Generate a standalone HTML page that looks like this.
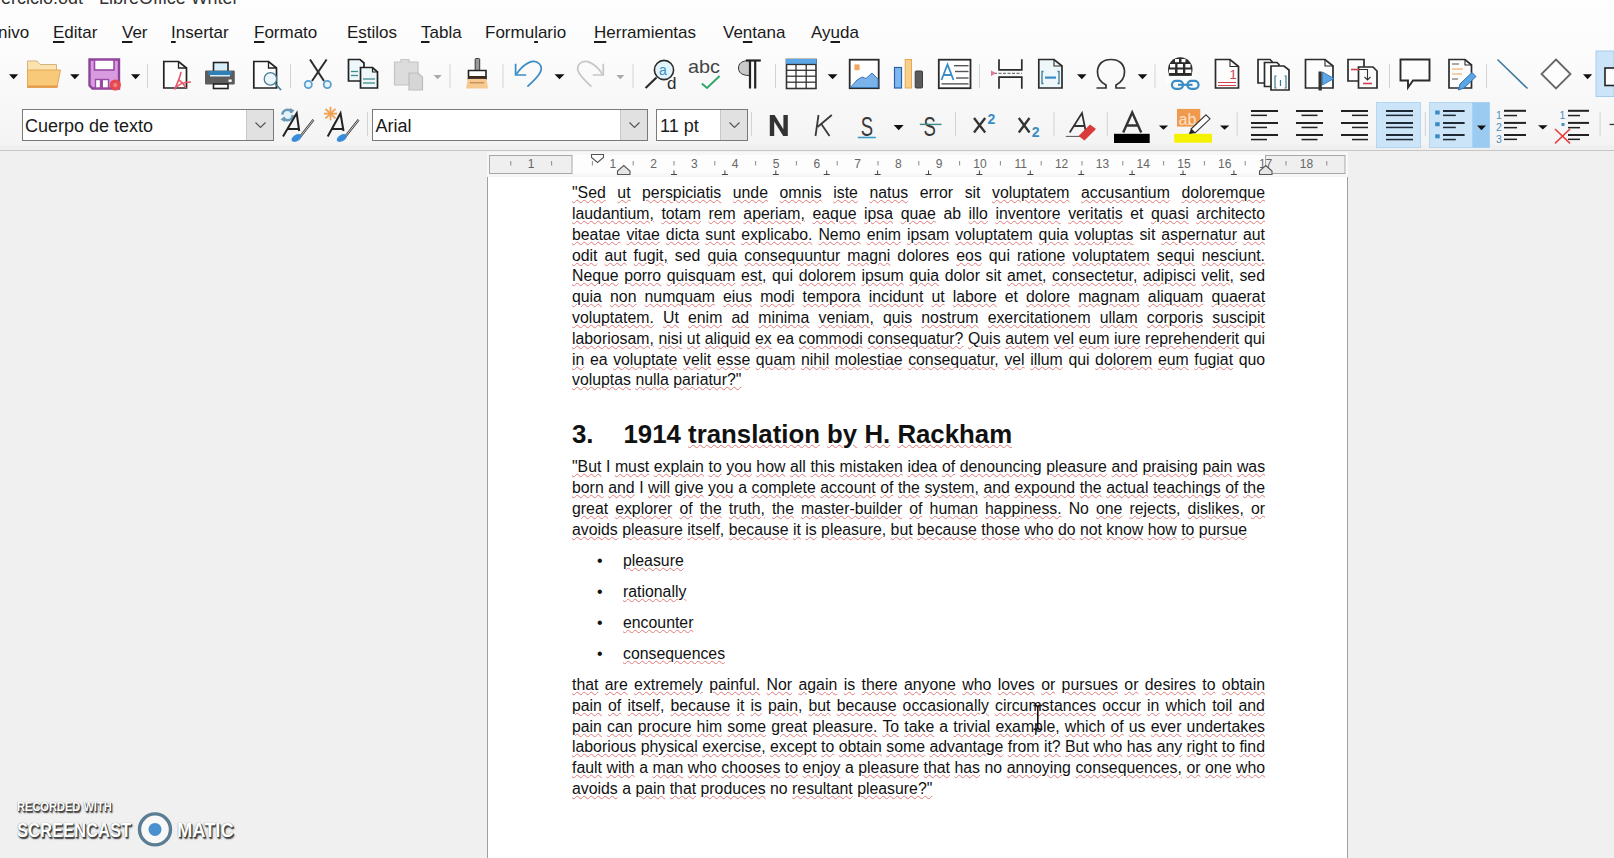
<!DOCTYPE html>
<html><head><meta charset="utf-8">
<style>
html,body{margin:0;padding:0}
body{width:1614px;height:858px;overflow:hidden;position:relative;background:#f0f0f0;font-family:"Liberation Sans",sans-serif;}
#top{position:absolute;left:0;top:0;width:1614px;height:150px;background:linear-gradient(#fefefe 0px,#fcfcfc 48px,#f8f8f8 100px,#f4f4f4 144px,#efefef 146px,#efefef 150px);}
#sep{position:absolute;left:0;top:150px;width:1614px;height:1px;background:#c6c6c6;}
.title{position:absolute;left:1px;top:-12px;font-size:18px;color:#333;white-space:pre}
.mi{position:absolute;top:21.6px;font-size:17px;line-height:22px;color:#1a1a1a;white-space:pre}
.mi u{text-decoration:underline;text-underline-offset:3px;text-decoration-thickness:1.6px}
.box{position:absolute;background:#fff;border:1px solid #7a7a7a;box-sizing:border-box}
.dd{position:absolute;top:0;bottom:0;right:0;background:#e1e1e1;border-left:1px solid #c8c8c8}
.bt{position:absolute;font-size:18px;line-height:20px;color:#1a1a1a;white-space:pre}
#page{position:absolute;left:487px;top:177px;width:861px;height:700px;background:#fff;border-left:1px solid #a0a0a0;border-right:1px solid #a0a0a0;box-sizing:border-box}
.ln{position:absolute;left:572px;width:693px;font-size:15.83px;line-height:20px;color:#111;text-align:justify;text-align-last:justify;white-space:nowrap}
.ln.l{text-align:left;text-align-last:left}
.ln s,.h3 s{text-decoration:underline wavy #e07a7a;text-decoration-thickness:1.2px;text-underline-offset:0.5px}
.bu{position:absolute;left:597px;font-size:15.83px;line-height:20px;color:#111}
.h3{position:absolute;top:418.5px;font-size:25.8px;font-weight:bold;line-height:30px;color:#111;white-space:pre}
#ruler{position:absolute;left:489px;top:155px;width:857px;height:19px;background:#fff}
.rb{position:absolute;top:0;height:19px;background:#ededed;border:1px solid #a6a6a6;box-sizing:border-box}
.rn{position:absolute;top:157px;font-size:13px;line-height:14px;color:#555;}
.sepv{position:absolute;width:1px;background:#d9d9d9}
</style></head><body>
<div id="top"></div>
<div id="sep"></div>
<div class="title">ercicio.odt - LibreOffice Writer</div>
<div class="mi" style="left:-2px">nivo</div>
<div class="mi" style="left:53px"><u>E</u>ditar</div>
<div class="mi" style="left:122px"><u>V</u>er</div>
<div class="mi" style="left:171px"><u>I</u>nsertar</div>
<div class="mi" style="left:254px"><u>F</u>ormato</div>
<div class="mi" style="left:347px">E<u>s</u>tilos</div>
<div class="mi" style="left:421px"><u>T</u>abla</div>
<div class="mi" style="left:485px">Formu<u>l</u>ario</div>
<div class="mi" style="left:594px"><u>H</u>erramientas</div>
<div class="mi" style="left:723px">Ve<u>n</u>tana</div>
<div class="mi" style="left:811px">Ay<u>u</u>da</div>
<svg style="position:absolute;left:0;top:0" width="1614" height="150" viewBox="0 0 1614 150">
<g id="row1">
<!-- dropdown arrows -->
<g fill="#111">
<polygon points="9,74.3 18.2,74.3 13.6,79.2"/>
<polygon points="70.2,74.3 79.5,74.3 74.9,79.2"/>
<polygon points="131,74.3 140.2,74.3 135.6,79.2"/>
<polygon points="554.5,74.3 564.5,74.3 559.5,79.2"/>
<polygon points="827.7,74.3 837.5,74.3 832.6,79.2"/>
<polygon points="1077,74.3 1086.5,74.3 1081.8,79.2"/>
<polygon points="1137.8,74.3 1147.3,74.3 1142.5,79.2"/>
<polygon points="1583,74.3 1592.2,74.3 1587.6,79.2"/>
</g>
<g fill="#aaa">
<polygon points="433.5,75 441.8,75 437.6,79.2"/>
<polygon points="616.3,75 624.3,75 620.3,79.2"/>
</g>
<!-- separators -->
<g fill="#d3d3d3">
<rect x="147" y="64" width="1" height="24"/>
<rect x="290" y="64" width="1" height="24"/>
<rect x="449.5" y="64" width="1" height="24"/>
<rect x="502.5" y="64" width="1" height="24"/>
<rect x="632.5" y="64" width="1" height="24"/>
<rect x="775" y="64" width="1" height="24"/>
<rect x="979" y="64" width="1" height="24"/>
<rect x="1154.5" y="64" width="1" height="24"/>
<rect x="1389" y="64" width="1" height="24"/>
<rect x="1486" y="64" width="1" height="24"/>
</g>
<!-- folder -->
<path d="M27.5,87.5 V61 H37 L40,64.5 H56.5 V70" fill="#fbe3b0" stroke="#d7b27a" stroke-width="1"/>
<path d="M27.5,87.5 V70 H60.5 L57,87.5 Z" fill="#f7c978" stroke="#e0a85a" stroke-width="1"/>
<rect x="27.5" y="85.5" width="30" height="2" fill="#e89a4a"/>
<!-- floppy -->
<path d="M89.5,59.5 H119 V88.5 H92.5 L89.5,85.5 Z" fill="#d89be0" stroke="#8f429a" stroke-width="2.4"/>
<rect x="94.5" y="60" width="19.5" height="10" fill="#fff" stroke="#9a4aa3" stroke-width="1.6"/>
<rect x="95.5" y="79.5" width="13" height="8.5" fill="#fff" stroke="#9a4aa3" stroke-width="1.4"/>
<rect x="99.8" y="80" width="3.2" height="8" fill="#9a4aa3"/>
<circle cx="115.3" cy="85" r="5.6" fill="#e5484d"/>
<circle cx="115.3" cy="85" r="2.2" fill="#f07d80"/>
<!-- pdf -->
<path d="M163.8,61.5 H178.5 L186.5,68 V88 H163.8 Z" fill="#fdfdfd" stroke="#222" stroke-width="1.7"/>
<path d="M178.5,61.5 V68 H186.5" fill="none" stroke="#222" stroke-width="1.3"/>
<path d="M181,72 C180,78 177,84 174.5,89.5 M174.5,89.5 C178,84 184,82 191,82 M179,80 C182,82 184,84 186,88" fill="none" stroke="#e55a6a" stroke-width="1.6"/>
<!-- printer -->
<rect x="213.5" y="62.5" width="14.5" height="9.5" fill="#d5eefa" stroke="#222" stroke-width="1.6"/>
<rect x="205" y="70.5" width="29.8" height="14" rx="1" fill="#5c5c5c"/>
<rect x="208.5" y="71" width="23" height="4" fill="#2f7fb5"/>
<rect x="210" y="75" width="20" height="1.5" fill="#d5eefa"/>
<rect x="228.5" y="79.5" width="3.2" height="2.4" fill="#fff"/>
<rect x="213.5" y="84" width="14.5" height="4.5" fill="#fff" stroke="#222" stroke-width="1.6"/>
<!-- preview -->
<path d="M253.8,61.5 H268.5 L276.5,68 V88 H253.8 Z" fill="#fdfdfd" stroke="#222" stroke-width="1.7"/>
<path d="M268.5,61.5 V68 H276.5" fill="none" stroke="#222" stroke-width="1.3"/>
<circle cx="270.4" cy="78.9" r="6.2" fill="#eaf6fb" stroke="#4c7f95" stroke-width="1.3"/>
<line x1="275" y1="83.5" x2="281" y2="90" stroke="#4c7f95" stroke-width="1.8"/>
<!-- scissors -->
<g stroke="#2b2b2b" stroke-width="2" fill="none">
<line x1="310" y1="59.5" x2="324" y2="81"/>
<line x1="326.6" y1="59.5" x2="312" y2="81"/>
</g>
<circle cx="308.3" cy="84.5" r="3.6" fill="#e7f4fb" stroke="#5aa0d0" stroke-width="1.8"/>
<circle cx="327.3" cy="84.5" r="3.6" fill="#e7f4fb" stroke="#5aa0d0" stroke-width="1.8"/>
<!-- copy -->
<path d="M348.5,59.5 H360 L364,63 V81 H348.5 Z" fill="#eef8fb" stroke="#222" stroke-width="1.7"/>
<path d="M360.5,67.5 H372.5 L377.5,72 V88 H360.5 Z" fill="#eef8fb" stroke="#222" stroke-width="1.7"/>
<path d="M372.5,67.5 V72 H377.5" fill="none" stroke="#222" stroke-width="1.2"/>
<g stroke="#3f8a85" stroke-width="1.3"><line x1="351" y1="71.5" x2="358" y2="71.5"/><line x1="351" y1="75.5" x2="358" y2="75.5"/><line x1="363" y1="79" x2="375" y2="79"/><line x1="363" y1="83" x2="375" y2="83"/></g>
<!-- paste gray -->
<path d="M394.5,62 H401 V59.5 H409 V62 H418 V85 H394.5 Z" fill="#dcdcdc" stroke="#c4c4c4" stroke-width="1.2"/>
<path d="M409,73 H418 L422.5,77 V90 H409 Z" fill="#d6d6d6" stroke="#bdbdbd" stroke-width="1.2"/>
<!-- brush -->
<rect x="475.2" y="58.5" width="4.5" height="12" rx="1" fill="#9a9a9a" stroke="#333" stroke-width="1"/>
<path d="M468.5,70.5 H486 V79 H468.5 Z" fill="#fff" stroke="#222" stroke-width="1.6"/>
<rect x="468" y="76" width="18.5" height="2.5" fill="#3d2a1c"/>
<path d="M466,88.5 L467.8,79 H486.5 L488,88.5 Z" fill="#f6c98f"/>
<rect x="470" y="82" width="14" height="1.4" fill="#c9905a"/>
<!-- undo -->
<g fill="none" stroke="#3a8cc4" stroke-width="1.7">
<path d="M515.6,63.8 V75 H526.2"/>
<path d="M516.5,74 C524,63 534,58 539.5,64 C545,70 537,78 527.4,86.7"/>
</g>
<!-- redo gray -->
<g fill="none" stroke="#c6c6c6" stroke-width="1.7">
<path d="M603.3,63.8 V75 H592.7"/>
<path d="M602.4,74 C595,63 585,58 579.4,64 C574,70 582,78 591.5,86.7"/>
</g>
<!-- find replace -->
<circle cx="664" cy="70" r="9.6" fill="#e1f4fb" stroke="#2b2b2b" stroke-width="1.6"/>
<line x1="656.5" y1="77.5" x2="645.6" y2="88" stroke="#2b2b2b" stroke-width="2.2"/>
<text x="659" y="74.5" font-family="Liberation Sans" font-size="14" fill="#3a8cc4">a</text>
<text x="667" y="88.5" font-family="Liberation Sans" font-size="17" fill="#2b2b2b">d</text>
<!-- abc -->
<text x="688" y="73.3" font-family="Liberation Sans" font-size="19" fill="#454545" textLength="32" lengthAdjust="spacingAndGlyphs">abc</text>
<path d="M701.8,83.5 L707,88 L719.6,76" fill="none" stroke="#2fa86a" stroke-width="2"/>
<!-- pilcrow -->
<path d="M749.5,60.5 C741,60.5 738.5,64 738.5,68 C738.5,72 741,75.5 749.5,75.5 Z" fill="#c9c9c9" stroke="#333" stroke-width="1"/>
<g stroke="#222" stroke-width="2.2"><line x1="746" y1="60.5" x2="760.8" y2="60.5"/><line x1="750" y1="60" x2="750" y2="88.5"/><line x1="755.2" y1="60" x2="755.2" y2="88.5"/></g>
<!-- table -->
<rect x="786.5" y="59.5" width="29.5" height="29" fill="#fff" stroke="#333" stroke-width="1.6"/>
<rect x="786" y="59" width="30.5" height="5.5" fill="#5aa6e6"/>
<g stroke="#333" stroke-width="1.3"><line x1="786" y1="64.5" x2="816" y2="64.5"/><line x1="786" y1="70.3" x2="816" y2="70.3"/><line x1="786" y1="76.2" x2="816" y2="76.2"/><line x1="786" y1="82.2" x2="816" y2="82.2"/><line x1="796" y1="64.5" x2="796" y2="88.5"/><line x1="806.2" y1="64.5" x2="806.2" y2="88.5"/></g>
<!-- image -->
<rect x="849.7" y="59.7" width="29" height="28.5" fill="#fff" stroke="#2b2b2b" stroke-width="1.8"/>
<rect x="854.4" y="64.4" width="5.2" height="5.8" fill="#f0a860"/>
<path d="M850.5,87.5 L857,80 L862,77 L866,78.5 L872,73 L878,79 V87.5 Z" fill="#79b3ea" stroke="#3d78b5" stroke-width="1"/>
<!-- chart -->
<rect x="894.5" y="67.5" width="7" height="20.5" fill="#7fb8f0" stroke="#2a62a8" stroke-width="1.2"/>
<rect x="905.2" y="59.5" width="6.3" height="28.5" fill="#f8cf8a" stroke="#e8a850" stroke-width="1"/>
<rect x="915.2" y="71" width="7.3" height="17" rx="1" fill="#5b5b5b" stroke="#3d3d3d" stroke-width="1"/>
<!-- textbox -->
<rect x="938.8" y="59.7" width="31.7" height="28.5" fill="#fff" stroke="#2b2b2b" stroke-width="1.8"/>
<path d="M941.5,80 L947.5,64.5 L953.5,80 M943.5,75 H951.5" fill="none" stroke="#3a8cc4" stroke-width="1.8"/>
<g stroke="#555" stroke-width="1.4"><line x1="954" y1="65.7" x2="968.5" y2="65.7"/><line x1="955" y1="71.5" x2="968.5" y2="71.5"/><line x1="956" y1="78" x2="968.5" y2="78"/><line x1="941.5" y1="83.9" x2="968.5" y2="83.9"/></g>
<!-- page break -->
<g stroke="#2b2b2b" stroke-width="1.7" fill="none"><path d="M999,59.2 V69.8 H1021.8 V59.2"/><path d="M999,88.8 V77.1 H1021.8 V88.8"/></g>
<line x1="994" y1="73.3" x2="1021.8" y2="73.3" stroke="#555" stroke-width="1" stroke-dasharray="3,1.5"/>
<polygon points="991,70.5 996,73.3 991,76" fill="#e07890"/>
<!-- field -->
<path d="M1038.8,59.5 H1054 L1062,66 V88 H1038.8 Z" fill="#eef8fb" stroke="#2b2b2b" stroke-width="1.7"/>
<path d="M1054,59.5 V66 H1062" fill="none" stroke="#2b2b2b" stroke-width="1.1"/>
<path d="M1043.5,71.5 H1042 V83.5 H1043.5 M1057.5,71.5 H1059 V83.5 H1057.5" fill="none" stroke="#3d7a94" stroke-width="1.3"/>
<line x1="1045" y1="77.6" x2="1056" y2="77.6" stroke="#3a8cc4" stroke-width="2.2"/>
<!-- omega -->
<path d="M1096.5,88 H1106 V85 C1100,82 1097.5,77 1097.5,72 C1097.5,64 1103,59.5 1111,59.5 C1119,59.5 1124.5,64 1124.5,72 C1124.5,77 1122,82 1116,85 V88 H1125.5" fill="none" stroke="#333" stroke-width="1.7"/>
<!-- hyperlink -->
<clipPath id="gclip"><circle cx="1180.3" cy="69.5" r="12.2"/></clipPath>
<circle cx="1180.3" cy="69.5" r="12.2" fill="#2b2b2b"/>
<g clip-path="url(#gclip)" fill="#fdfdfd">
<rect x="1175" y="59" width="4" height="3.2"/><rect x="1181.5" y="59" width="4" height="3.2"/>
<rect x="1170" y="64" width="5.2" height="3.5"/><rect x="1177.5" y="64" width="5.5" height="3.5"/><rect x="1185.3" y="64" width="5.2" height="3.5"/>
<rect x="1169" y="69.5" width="6" height="3.5"/><rect x="1177.5" y="69.5" width="5.5" height="3.5"/><rect x="1185.3" y="69.5" width="6" height="3.5"/>
</g>
<rect x="1166" y="75.5" width="29" height="8" fill="#fdfdfd"/>
<path d="M1168.8,75 H1191.8" stroke="#2b2b2b" stroke-width="1.6"/>
<g fill="none" stroke="#3a8cc4" stroke-width="2.2"><rect x="1172" y="80.8" width="11" height="8" rx="3.8"/><rect x="1187.5" y="80.8" width="11" height="8" rx="3.8"/><line x1="1178" y1="84.8" x2="1192.5" y2="84.8"/></g>
<!-- footnote page -->
<path d="M1215.5,59.5 H1230 L1238.5,66.5 V88 H1215.5 Z" fill="#fdfdfd" stroke="#2b2b2b" stroke-width="1.7"/>
<path d="M1230,59.5 V66.5 H1238.5" fill="none" stroke="#2b2b2b" stroke-width="1.1"/>
<text x="1229.5" y="78.5" font-family="Liberation Sans" font-size="13" fill="#d04050">1</text>
<g stroke="#d04050" stroke-width="1"><line x1="1218" y1="82.5" x2="1236" y2="82.5"/><line x1="1218" y1="85.5" x2="1236" y2="85.5"/></g>
<!-- multipages -->
<g fill="#fdfdfd" stroke="#2b2b2b" stroke-width="1.7">
<path d="M1258,59.5 H1270 L1272,61.5 V83 H1258 Z"/>
<path d="M1264.5,62.5 H1277 L1279,64.5 V86.5 H1264.5 Z"/>
<path d="M1271,66 H1284 L1289,70 V90 H1271 Z"/>
</g>
<path d="M1276.5,76 H1275 V88 H1276.5 M1284.5,76 H1286 V88 H1284.5 M1280.5,80 V86" fill="none" stroke="#3d7a94" stroke-width="1.2"/>
<!-- page w flag -->
<path d="M1305.5,59.5 H1325 L1333,66 V88 H1305.5 Z" fill="#fdfdfd" stroke="#2b2b2b" stroke-width="1.7"/>
<path d="M1325,59.5 V66 H1333" fill="none" stroke="#2b2b2b" stroke-width="1.1"/>
<rect x="1318.5" y="71.5" width="3.3" height="19" fill="#333"/>
<polygon points="1322.5,72 1334,78.5 1322.5,85" fill="#5aa6e6" stroke="#2a6fb0" stroke-width="0.8"/>
<!-- track changes -->
<path d="M1348,59.5 H1364 V81 H1348 Z" fill="#fdfdfd" stroke="#2b2b2b" stroke-width="1.7"/>
<path d="M1358.5,67 H1373 L1377,71 V88 H1358.5 Z" fill="#fdfdfd" stroke="#2b2b2b" stroke-width="1.7"/>
<line x1="1351" y1="69.5" x2="1359" y2="69.5" stroke="#d04050" stroke-width="1.6"/>
<path d="M1359,69.5 H1367.5 V80 M1364.5,77 L1367.5,80 L1370.5,77" fill="none" stroke="#333" stroke-width="1.1"/>
<line x1="1363" y1="83.5" x2="1372" y2="83.5" stroke="#d04050" stroke-width="1.6"/>
<!-- comment -->
<path d="M1400.5,59.5 H1429.5 V80.5 H1413 L1408,87.5 V80.5 H1400.5 Z" fill="#fdfdfd" stroke="#2b2b2b" stroke-width="1.9"/>
<!-- edit doc -->
<path d="M1449,59.5 H1465 L1471.5,65 V88 H1449 Z" fill="#fdfdfd" stroke="#2b2b2b" stroke-width="1.7"/>
<path d="M1465,59.5 V65 H1471.5" fill="none" stroke="#2b2b2b" stroke-width="1.1"/>
<g stroke-width="1"><line x1="1452" y1="64" x2="1459" y2="64" stroke="#555"/><line x1="1452" y1="69" x2="1463" y2="69" stroke="#f0a050"/><line x1="1452" y1="74" x2="1462" y2="74" stroke="#f0a050"/><line x1="1452" y1="79" x2="1458" y2="79" stroke="#555"/></g>
<path d="M1458.5,90 L1460,84 L1472,72.5 L1476,76.5 L1464,88 Z" fill="#5aa6e6" stroke="#2a6fb0" stroke-width="1"/>
<!-- line -->
<line x1="1497.5" y1="59.5" x2="1527.5" y2="88.5" stroke="#3d78a0" stroke-width="1.6"/>
<!-- diamond -->
<polygon points="1556,59.5 1570.5,74 1556,88.5 1541.5,74" fill="#fdfdfd" stroke="#666" stroke-width="1.8"/>
<!-- highlighted btn at right -->
<rect x="1596" y="51" width="18" height="45.5" fill="#cce4f7"/>
<rect x="1596" y="51" width="18" height="45.5" fill="none" stroke="#a6cdee" stroke-width="1"/>
<rect x="1605" y="68" width="10" height="17.5" fill="#fdfdfd" stroke="#222" stroke-width="1.6"/>
</g>
</svg>
<!-- row 2 boxes -->
<div class="box" style="left:22px;top:109px;width:252px;height:32px"><div class="dd" style="width:26px"></div></div>
<div class="bt" style="left:25px;top:116px">Cuerpo de texto</div>
<div class="box" style="left:372px;top:109px;width:276px;height:32px"><div class="dd" style="width:26px"></div></div>
<div class="bt" style="left:375.5px;top:116px">Arial</div>
<div class="box" style="left:656px;top:109px;width:92px;height:32px"><div class="dd" style="width:26px"></div></div>
<div class="bt" style="left:660px;top:116px">11 pt</div>
<svg style="position:absolute;left:0;top:0" width="1614" height="150" viewBox="0 0 1614 150">
<g fill="none" stroke="#555" stroke-width="1.2">
<path d="M255.5,122.5 L260.5,127.5 L265.5,122.5"/>
<path d="M629.5,122.5 L634.5,127.5 L639.5,122.5"/>
<path d="M729.5,122.5 L734.5,127.5 L739.5,122.5"/>
</g>
<!-- separators row2 -->
<g fill="#d3d3d3">
<rect x="367" y="112" width="1" height="24"/>
<rect x="751" y="112" width="1" height="24"/>
<rect x="955" y="112" width="1" height="24"/>
<rect x="1053.5" y="112" width="1" height="24"/>
<rect x="1106.8" y="112" width="1" height="24"/>
<rect x="1236.6" y="112" width="1" height="24"/>
<rect x="1424.8" y="112" width="1" height="24"/>
<rect x="1599.6" y="112" width="1" height="24"/>
</g>
<!-- update style -->
<circle cx="287.5" cy="115" r="5.2" fill="#e3f1f8" stroke="#6a98b8" stroke-width="2.6" stroke-dasharray="13 3.3"/>
<polygon points="290,108 294.5,110.5 290.5,113.5" fill="#6a98b8"/><polygon points="285,122 280.5,119.5 284.5,116.5" fill="#6a98b8"/>
<path d="M283,136.5 L296.7,113.3 L299.2,131 M287.5,129 H299" fill="none" stroke="#222" stroke-width="2"/>
<path d="M313.5,119.8 L300,137" fill="none" stroke="#333" stroke-width="2.2"/>
<path d="M313.5,119.8 L300,137" fill="none" stroke="#fff" stroke-width="0.8"/>
<ellipse cx="296.5" cy="138" rx="5.5" ry="3.2" transform="rotate(-30 296.5 138)" fill="#3a8cd8"/>
<!-- new style -->
<g stroke="#f0a050" stroke-width="1.8"><line x1="330.5" y1="106.8" x2="330.5" y2="120.4"/><line x1="324" y1="113.6" x2="337" y2="113.6"/><line x1="325.5" y1="108.8" x2="335.5" y2="118.4"/><line x1="335.5" y1="108.8" x2="325.5" y2="118.4"/></g>
<path d="M327.7,136.5 L340.5,113.3 L343.5,131 M332,129 H343" fill="none" stroke="#222" stroke-width="2"/>
<path d="M358.6,119.8 L345,137" fill="none" stroke="#333" stroke-width="2.2"/>
<path d="M358.6,119.8 L345,137" fill="none" stroke="#fff" stroke-width="0.8"/>
<ellipse cx="341.8" cy="138" rx="5.5" ry="3.2" transform="rotate(-30 341.8 138)" fill="#3a8cd8"/>
<!-- N K S -->
<polygon points="769.8,136 769.8,115 774.6,115 783.4,129.2 783.4,115 787.8,115 787.8,136 783.2,136 774.2,121.6 774.2,136" fill="#333"/>
<g stroke="#3a3a3a" stroke-width="1.8" fill="none"><line x1="818.5" y1="115" x2="815.5" y2="136"/><line x1="831.8" y1="115" x2="817.5" y2="127"/><line x1="821.5" y1="124.2" x2="829.5" y2="136"/></g>
<text x="867" y="136" font-family="Liberation Sans" font-size="28" fill="#3a3a3a" text-anchor="middle" transform="translate(867 0) scale(0.66 1) translate(-867 0)">S</text>
<line x1="857.8" y1="137.5" x2="875.8" y2="137.5" stroke="#3a9ac8" stroke-width="1.6"/>
<polygon points="893.7,125 903.7,125 898.7,130.2" fill="#111"/>
<text x="929.7" y="136" font-family="Liberation Sans" font-size="28" fill="#3a3a3a" text-anchor="middle" transform="translate(929.7 0) scale(0.66 1) translate(-929.7 0)">S</text>
<line x1="919.8" y1="124.4" x2="941.5" y2="124.4" stroke="#3d8a85" stroke-width="1.4"/>
<!-- x2 -->
<g stroke="#333" stroke-width="2.3"><line x1="974" y1="118" x2="985.2" y2="132.5"/><line x1="985.2" y1="118" x2="974" y2="132.5"/>
<line x1="1018.8" y1="118" x2="1029.5" y2="132.5"/><line x1="1029.5" y1="118" x2="1018.8" y2="132.5"/></g>
<text x="987.5" y="123.5" font-family="Liberation Sans" font-weight="bold" font-size="14" fill="#3a8cc4">2</text>
<text x="1031.8" y="137.2" font-family="Liberation Sans" font-weight="bold" font-size="14" fill="#3a8cc4">2</text>
<!-- clear formatting -->
<path d="M1069.7,132.5 L1082,113 L1086,132.5 M1074,126 H1085" fill="none" stroke="#333" stroke-width="1.8"/>
<line x1="1065.8" y1="136.4" x2="1080" y2="136.4" stroke="#555" stroke-width="1"/>
<path d="M1078.5,136 L1090,124.5 L1096,129 L1084.5,140.5 Z" fill="#d93a3a"/>
<!-- font color -->
<path d="M1123.2,132.5 L1132.2,112.5 L1141.2,132.5 M1126.5,125.5 H1138" fill="none" stroke="#333" stroke-width="2.4"/>
<rect x="1114" y="133.8" width="35.7" height="9.2" fill="#000"/>
<polygon points="1158.9,125.4 1168.1,125.4 1163.5,129.8" fill="#111"/>
<!-- highlight -->
<rect x="1177" y="108.9" width="23.3" height="17.7" fill="#f09a50"/>
<text x="1178.5" y="124.5" font-family="Liberation Sans" font-size="16" fill="#fbe1c4">ab</text>
<path d="M1206,114.8 L1210,118.8 L1195,133 L1191,129 Z" fill="#fdfdfd" stroke="#333" stroke-width="1.1"/>
<polygon points="1191,129 1195,133 1188.5,134.5" fill="#222"/>
<rect x="1174.2" y="133.8" width="37.8" height="8.9" fill="#f5f200"/>
<polygon points="1220,125.4 1229.3,125.4 1224.6,129.8" fill="#111"/>
<!-- align left/center/right -->
<g fill="#222">
<rect x="1251" y="110" width="27" height="2"/><rect x="1251" y="114.6" width="16" height="1.5"/>
<rect x="1251" y="122" width="27" height="2"/><rect x="1251" y="126.7" width="16" height="1.5"/>
<rect x="1251" y="134" width="27" height="2"/><rect x="1251" y="138.8" width="16" height="1.5"/>
<rect x="1296" y="110" width="27" height="2"/><rect x="1301.5" y="114.6" width="16" height="1.5"/>
<rect x="1296" y="122" width="27" height="2"/><rect x="1301.5" y="126.7" width="16" height="1.5"/>
<rect x="1296" y="134" width="27" height="2"/><rect x="1301.5" y="138.8" width="16" height="1.5"/>
<rect x="1341" y="110" width="27" height="2"/><rect x="1352" y="114.6" width="16" height="1.5"/>
<rect x="1341" y="122" width="27" height="2"/><rect x="1352" y="126.7" width="16" height="1.5"/>
<rect x="1341" y="134" width="27" height="2"/><rect x="1352" y="138.8" width="16" height="1.5"/>
</g>
<!-- justify highlighted -->
<rect x="1376.5" y="102.5" width="44" height="45" fill="#cce4f7" stroke="#b3d7f3" stroke-width="1"/>
<g fill="#1f2a36">
<rect x="1386" y="110" width="27" height="2"/><rect x="1386" y="114.6" width="27" height="1.5"/>
<rect x="1386" y="122" width="27" height="2"/><rect x="1386" y="126.7" width="27" height="1.5"/>
<rect x="1386" y="134" width="27" height="2"/><rect x="1386" y="138.8" width="27" height="1.5"/>
</g>
<!-- bullets highlighted -->
<rect x="1429.5" y="102.5" width="60" height="45" fill="#cce4f7" stroke="#b3d7f3" stroke-width="1"/>
<rect x="1472.3" y="102.5" width="17.2" height="45" fill="#9ccbf1"/>
<polygon points="1477,125.4 1486,125.4 1481.5,130.2" fill="#111"/>
<g fill="#3a8cc4"><rect x="1435.2" y="110.5" width="4.5" height="4"/><rect x="1435.2" y="122.2" width="4.5" height="4"/><rect x="1435.2" y="134.3" width="4.5" height="4"/></g>
<g fill="#1f2a36">
<rect x="1443" y="110" width="21.6" height="2"/><rect x="1443" y="114.6" width="12.8" height="1.5"/>
<rect x="1443" y="122" width="21.6" height="2"/><rect x="1443" y="126.7" width="12.8" height="1.5"/>
<rect x="1443" y="134" width="21.6" height="2"/><rect x="1443" y="138.8" width="12.8" height="1.5"/>
</g>
<!-- numbering -->
<g font-family="Liberation Sans" font-size="10.5" fill="#4a8fc0"><text x="1496" y="119">1</text><text x="1496" y="131">2</text><text x="1496" y="143">3</text></g>
<g fill="#222">
<rect x="1504" y="109.8" width="22" height="2"/><rect x="1504" y="114.8" width="13" height="1.5"/>
<rect x="1504" y="121.9" width="22" height="2"/><rect x="1504" y="126.9" width="13" height="1.5"/>
<rect x="1504" y="134" width="22" height="2"/><rect x="1504" y="138.6" width="13" height="1.5"/>
</g>
<polygon points="1538,125.2 1547.6,125.2 1542.8,129.6" fill="#111"/>
<!-- remove numbering -->
<text x="1559.5" y="119" font-family="Liberation Sans" font-size="10.5" fill="#4a8fc0">1</text>
<rect x="1561.5" y="123" width="3" height="3" fill="#4a8fc0"/>
<g fill="#222">
<rect x="1568" y="109.8" width="21" height="2"/><rect x="1568" y="114.8" width="12" height="1.5"/>
<rect x="1568" y="121.9" width="21" height="2"/><rect x="1568" y="126.9" width="12" height="1.5"/>
<rect x="1568" y="134" width="21" height="2"/><rect x="1568" y="138.6" width="12" height="1.5"/>
</g>
<g stroke="#e84040" stroke-width="1.6"><line x1="1555" y1="129" x2="1570" y2="143.3"/><line x1="1570" y1="129" x2="1555" y2="143.3"/></g>
<rect x="1609.6" y="123.8" width="5" height="1.3" fill="#333"/>
</svg>

<svg style="position:absolute;left:0;top:0" width="1614" height="180" viewBox="0 0 1614 180">
<rect x="487" y="151.5" width="861" height="25" fill="#f7f7f7"/>
<rect x="489" y="155" width="858" height="18.5" fill="#fdfdfd"/>
<rect x="489.5" y="155.5" width="82.5" height="18" fill="#efefef" stroke="#a8a8a8" stroke-width="1"/>
<rect x="1265.5" y="155.5" width="79.5" height="18" fill="#efefef" stroke="#a8a8a8" stroke-width="1"/>
<g font-family="Liberation Sans" font-size="12" fill="#666" text-anchor="middle">
<text x="612.8" y="168.3">1</text>
<text x="653.6" y="168.3">2</text>
<text x="694.4" y="168.3">3</text>
<text x="735.2" y="168.3">4</text>
<text x="776.0" y="168.3">5</text>
<text x="816.8" y="168.3">6</text>
<text x="857.6" y="168.3">7</text>
<text x="898.4" y="168.3">8</text>
<text x="939.2" y="168.3">9</text>
<text x="980.0" y="168.3">10</text>
<text x="1020.8" y="168.3">11</text>
<text x="1061.6" y="168.3">12</text>
<text x="1102.4" y="168.3">13</text>
<text x="1143.2" y="168.3">14</text>
<text x="1184.0" y="168.3">15</text>
<text x="1224.8" y="168.3">16</text>
<text x="1265.6" y="168.3">17</text>
<text x="1306.4" y="168.3">18</text>
<text x="531" y="168.3">1</text>
</g><g fill="#8a8a8a">
<rect x="510.3" y="161" width="1" height="4.5"/>
<rect x="551.1" y="161" width="1" height="4.5"/>
<rect x="591.9" y="161" width="1" height="4.5"/>
<rect x="632.7" y="161" width="1" height="4.5"/>
<rect x="673.5" y="161" width="1" height="4.5"/>
<rect x="714.3" y="161" width="1" height="4.5"/>
<rect x="755.1" y="161" width="1" height="4.5"/>
<rect x="795.9" y="161" width="1" height="4.5"/>
<rect x="836.7" y="161" width="1" height="4.5"/>
<rect x="877.5" y="161" width="1" height="4.5"/>
<rect x="918.3" y="161" width="1" height="4.5"/>
<rect x="959.1" y="161" width="1" height="4.5"/>
<rect x="999.9" y="161" width="1" height="4.5"/>
<rect x="1040.7" y="161" width="1" height="4.5"/>
<rect x="1081.5" y="161" width="1" height="4.5"/>
<rect x="1122.3" y="161" width="1" height="4.5"/>
<rect x="1163.1" y="161" width="1" height="4.5"/>
<rect x="1203.9" y="161" width="1" height="4.5"/>
<rect x="1244.7" y="161" width="1" height="4.5"/>
<rect x="1285.5" y="161" width="1" height="4.5"/>
<rect x="1326.3" y="161" width="1" height="4.5"/>
</g><g fill="#444">
<rect x="673.5" y="170.5" width="1" height="4"/><rect x="671.0" y="174" width="6" height="1"/>
<rect x="724.4" y="170.5" width="1" height="4"/><rect x="721.9" y="174" width="6" height="1"/>
<rect x="775.3" y="170.5" width="1" height="4"/><rect x="772.8" y="174" width="6" height="1"/>
<rect x="826.2" y="170.5" width="1" height="4"/><rect x="823.7" y="174" width="6" height="1"/>
<rect x="877.1" y="170.5" width="1" height="4"/><rect x="874.6" y="174" width="6" height="1"/>
<rect x="928.0" y="170.5" width="1" height="4"/><rect x="925.5" y="174" width="6" height="1"/>
<rect x="978.9" y="170.5" width="1" height="4"/><rect x="976.4" y="174" width="6" height="1"/>
<rect x="1029.8" y="170.5" width="1" height="4"/><rect x="1027.3" y="174" width="6" height="1"/>
<rect x="1080.7" y="170.5" width="1" height="4"/><rect x="1078.2" y="174" width="6" height="1"/>
<rect x="1131.6" y="170.5" width="1" height="4"/><rect x="1129.1" y="174" width="6" height="1"/>
<rect x="1182.5" y="170.5" width="1" height="4"/><rect x="1180.0" y="174" width="6" height="1"/>
<rect x="1233.4" y="170.5" width="1" height="4"/><rect x="1230.9" y="174" width="6" height="1"/>
</g>
<path d="M591.5,154.5 H603.5 V157.5 L597.5,162.5 L591.5,157.5 Z" fill="#fdfdfd" stroke="#555" stroke-width="1.1"/>
<path d="M617.5,174.5 H630 V171 L623.75,165.5 L617.5,171 Z" fill="#e6e6e6" stroke="#555" stroke-width="1.1"/>
<path d="M1259.5,174.5 H1272 V171 L1265.75,165.5 L1259.5,171 Z" fill="#e6e6e6" stroke="#555" stroke-width="1.1"/>
</svg>
<div id="page"></div>
<div class="ln" style="top:183.1px"><s>&quot;Sed</s> <s>ut</s> <s>perspiciatis</s> <s>unde</s> <s>omnis</s> <s>iste</s> <s>natus</s> error sit <s>voluptatem</s> <s>accusantium</s> <s>doloremque</s></div>
<div class="ln" style="top:203.9px"><s>laudantium,</s> <s>totam</s> <s>rem</s> <s>aperiam,</s> <s>eaque</s> <s>ipsa</s> <s>quae</s> ab <s>illo</s> <s>inventore</s> <s>veritatis</s> et <s>quasi</s> <s>architecto</s></div>
<div class="ln" style="top:224.7px"><s>beatae</s> <s>vitae</s> <s>dicta</s> <s>sunt</s> <s>explicabo.</s> <s>Nemo</s> <s>enim</s> <s>ipsam</s> <s>voluptatem</s> <s>quia</s> <s>voluptas</s> sit <s>aspernatur</s> <s>aut</s></div>
<div class="ln" style="top:245.5px"><s>odit</s> <s>aut</s> <s>fugit,</s> sed <s>quia</s> <s>consequuntur</s> <s>magni</s> dolores <s>eos</s> qui <s>ratione</s> <s>voluptatem</s> <s>sequi</s> <s>nesciunt.</s></div>
<div class="ln" style="top:266.3px"><s>Neque</s> <s>porro</s> <s>quisquam</s> <s>est,</s> qui <s>dolorem</s> <s>ipsum</s> <s>quia</s> dolor sit <s>amet,</s> <s>consectetur,</s> <s>adipisci</s> <s>velit,</s> sed</div>
<div class="ln" style="top:287.1px"><s>quia</s> <s>non</s> <s>numquam</s> <s>eius</s> <s>modi</s> <s>tempora</s> <s>incidunt</s> <s>ut</s> <s>labore</s> et <s>dolore</s> <s>magnam</s> <s>aliquam</s> <s>quaerat</s></div>
<div class="ln" style="top:307.9px"><s>voluptatem.</s> <s>Ut</s> <s>enim</s> <s>ad</s> <s>minima</s> <s>veniam,</s> <s>quis</s> <s>nostrum</s> <s>exercitationem</s> <s>ullam</s> <s>corporis</s> <s>suscipit</s></div>
<div class="ln" style="top:328.7px"><s>laboriosam,</s> <s>nisi</s> <s>ut</s> <s>aliquid</s> <s>ex</s> ea <s>commodi</s> <s>consequatur?</s> <s>Quis</s> <s>autem</s> <s>vel</s> <s>eum</s> <s>iure</s> <s>reprehenderit</s> qui</div>
<div class="ln" style="top:349.5px"><s>in</s> ea <s>voluptate</s> <s>velit</s> <s>esse</s> <s>quam</s> <s>nihil</s> <s>molestiae</s> <s>consequatur,</s> <s>vel</s> <s>illum</s> qui <s>dolorem</s> <s>eum</s> <s>fugiat</s> quo</div>
<div class="ln l" style="top:370.3px"><s>voluptas</s> <s>nulla</s> <s>pariatur?&quot;</s></div>
<div class="ln" style="top:457.0px"><s>&quot;But</s> I <s>must</s> <s>explain</s> <s>to</s> <s>you</s> <s>how</s> <s>all</s> <s>this</s> <s>mistaken</s> <s>idea</s> <s>of</s> <s>denouncing</s> <s>pleasure</s> <s>and</s> <s>praising</s> <s>pain</s> <s>was</s></div>
<div class="ln" style="top:477.9px"><s>born</s> <s>and</s> I <s>will</s> <s>give</s> <s>you</s> a <s>complete</s> <s>account</s> <s>of</s> <s>the</s> <s>system,</s> <s>and</s> <s>expound</s> <s>the</s> <s>actual</s> <s>teachings</s> <s>of</s> <s>the</s></div>
<div class="ln" style="top:498.8px"><s>great</s> <s>explorer</s> <s>of</s> <s>the</s> <s>truth,</s> <s>the</s> <s>master-builder</s> <s>of</s> <s>human</s> <s>happiness.</s> No <s>one</s> <s>rejects,</s> <s>dislikes,</s> <s>or</s></div>
<div class="ln l" style="top:519.7px"><s>avoids</s> <s>pleasure</s> <s>itself,</s> <s>because</s> <s>it</s> <s>is</s> <s>pleasure,</s> <s>but</s> <s>because</s> <s>those</s> <s>who</s> <s>do</s> <s>not</s> <s>know</s> <s>how</s> <s>to</s> <s>pursue</s></div>
<div class="bu" style="top:550.5px">&bull;</div><div class="ln l" style="left:623px;top:550.5px"><s>pleasure</s></div>
<div class="bu" style="top:581.5px">&bull;</div><div class="ln l" style="left:623px;top:581.5px"><s>rationally</s></div>
<div class="bu" style="top:612.5px">&bull;</div><div class="ln l" style="left:623px;top:612.5px"><s>encounter</s></div>
<div class="bu" style="top:643.5px">&bull;</div><div class="ln l" style="left:623px;top:643.5px"><s>consequences</s></div>
<div class="ln" style="top:675.0px"><s>that</s> <s>are</s> <s>extremely</s> <s>painful.</s> <s>Nor</s> <s>again</s> <s>is</s> <s>there</s> <s>anyone</s> <s>who</s> <s>loves</s> <s>or</s> <s>pursues</s> <s>or</s> <s>desires</s> <s>to</s> <s>obtain</s></div>
<div class="ln" style="top:695.8px"><s>pain</s> <s>of</s> <s>itself,</s> <s>because</s> <s>it</s> <s>is</s> <s>pain,</s> <s>but</s> <s>because</s> <s>occasionally</s> <s>circumstances</s> <s>occur</s> <s>in</s> <s>which</s> <s>toil</s> <s>and</s></div>
<div class="ln" style="top:716.6px"><s>pain</s> <s>can</s> <s>procure</s> <s>him</s> <s>some</s> <s>great</s> <s>pleasure.</s> <s>To</s> <s>take</s> a <s>trivial</s> <s>example,</s> <s>which</s> <s>of</s> <s>us</s> <s>ever</s> <s>undertakes</s></div>
<div class="ln" style="top:737.4px"><s>laborious</s> <s>physical</s> <s>exercise,</s> <s>except</s> <s>to</s> <s>obtain</s> <s>some</s> <s>advantage</s> <s>from</s> <s>it?</s> <s>But</s> <s>who</s> <s>has</s> <s>any</s> <s>right</s> <s>to</s> <s>find</s></div>
<div class="ln" style="top:758.2px"><s>fault</s> <s>with</s> a <s>man</s> <s>who</s> <s>chooses</s> <s>to</s> <s>enjoy</s> a <s>pleasure</s> <s>that</s> <s>has</s> no <s>annoying</s> <s>consequences,</s> <s>or</s> <s>one</s> <s>who</s></div>
<div class="ln l" style="top:779.0px"><s>avoids</s> a <s>pain</s> <s>that</s> <s>produces</s> no <s>resultant</s> <s>pleasure?&quot;</s></div>
<div class="h3" style="left:572px">3.</div><div class="h3" style="left:623.5px">1914 <s>translation</s> <s>by</s> <s>H.</s> <s>Rackham</s></div>
<svg style="position:absolute;left:1028px;top:700px" width="20" height="36" viewBox="1028 700 20 36"><g stroke="#111" stroke-width="1.6" fill="none"><path d="M1033.5,705.5 H1036.5 Q1037.8,706.5 1037.8,708 V727 Q1037.8,728.5 1036.5,729.2 H1033.5 M1042.2,705.5 H1039.2 Q1037.8,706.5 1037.8,708 M1037.8,727 Q1037.8,728.5 1039.2,729.2 H1042.2"/></g></svg>
<div style="position:absolute;left:16.5px;top:799px;font-size:13.5px;font-weight:bold;color:#fff;white-space:pre;line-height:15px;transform:scaleX(0.82);transform-origin:0 0;text-shadow:1px 1px 0 #444,1.5px 1.5px 1.5px #333,0 0 1px #666">RECORDED WITH</div>
<div style="position:absolute;left:17px;top:818.5px;font-size:19.5px;font-weight:bold;color:#fff;white-space:pre;line-height:22px;transform:scaleX(0.85);transform-origin:0 0;text-shadow:1px 1px 0 #444,1.5px 1.5px 1.5px #333,0 0 1px #666">SCREENCAST</div>
<div style="position:absolute;left:176.5px;top:818.5px;font-size:19.5px;font-weight:bold;color:#fff;white-space:pre;line-height:22px;transform:scaleX(0.94);transform-origin:0 0;text-shadow:1px 1px 0 #444,1.5px 1.5px 1.5px #333,0 0 1px #666">MATIC</div>
<svg style="position:absolute;left:136px;top:810px" width="38" height="38" viewBox="0 0 38 38">
<circle cx="19" cy="19.4" r="15.5" fill="#f8f8f8" stroke="#5b7d94" stroke-width="3.4"/>
<circle cx="19" cy="19.4" r="6.5" fill="#4a8fd0"/>
</svg>

</body></html>
